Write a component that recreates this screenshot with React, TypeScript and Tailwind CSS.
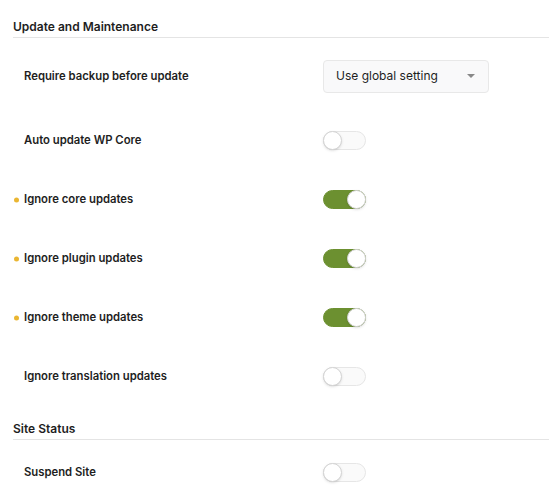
import { type FC } from "react";

/* ============================================================
   TOGGLE
============================================================ */

const Toggle: FC<{ on?: boolean }> = ({ on }) => (
  <div
    className={`relative w-[43px] h-[19px] rounded-full border ${
      on ? "bg-[#6c9030] border-[#6c9030]" : "bg-[#fafafa] border-[#e6e6e6]"
    }`}
  >
    <div
      className={`absolute top-[-1px] w-[19px] h-[19px] rounded-full bg-white border border-[#d4d4d4] shadow-sm ${
        on ? "right-[-1px]" : "left-[-1px]"
      }`}
    />
  </div>
);

/* ============================================================
   ROW
============================================================ */

const Row: FC<{ label: string; dot?: boolean; children: React.ReactNode; h?: string }> = ({
  label,
  dot,
  children,
  h = "h-[59px]",
}) => (
  <div className={`flex items-center ${h}`}>
    <div className="relative w-[323px] pl-[24px] text-[11.3px] font-semibold text-[#1e1e1e]">
      {dot && (
        <span className="absolute left-[14px] top-1/2 -translate-y-1/2 w-[5px] h-[5px] rounded-full bg-[#eab632]" />
      )}
      {label}
    </div>
    {children}
  </div>
);

const Heading: FC<{ title: string }> = ({ title }) => (
  <div className="ml-[13px] border-b border-[#e4e4e4] pb-[1px]">
    <h2 className="text-[12px] font-semibold text-[#1e1e1e] leading-[18px]">{title}</h2>
  </div>
);

export default function App() {
  return (
    <div
      className="w-[549px] h-[500px] bg-white overflow-hidden pt-[18px]"
      style={{ fontFamily: "Inter, 'Noto Sans', sans-serif" }}
    >
      <Heading title="Update and Maintenance" />

      <div className="mt-[8px]">
        <Row label="Require backup before update" h="h-[60px]">
          <div className="w-[166px] h-[33px] rounded-[4px] border border-[#e8e8e8] bg-[#f9f9fa] flex items-center justify-between pl-[12px] pr-[13px]">
            <span className="text-[12px] text-[#1e1e1e]">Use global setting</span>
            <span className="w-0 h-0 border-l-[4px] border-r-[4px] border-t-[4px] border-l-transparent border-r-transparent border-t-[#888]" />
          </div>
        </Row>
        <div className="h-[5px]" />
        <Row label="Auto update WP Core">
          <Toggle />
        </Row>
        <Row label="Ignore core updates" dot>
          <Toggle on />
        </Row>
        <Row label="Ignore plugin updates" dot>
          <Toggle on />
        </Row>
        <Row label="Ignore theme updates" dot>
          <Toggle on />
        </Row>
        <Row label="Ignore translation updates">
          <Toggle />
        </Row>
      </div>

      <div className="mt-[14px]">
        <Heading title="Site Status" />
      </div>
      <div className="mt-[3px]">
        <Row label="Suspend Site">
          <Toggle />
        </Row>
      </div>
    </div>
  );
}
